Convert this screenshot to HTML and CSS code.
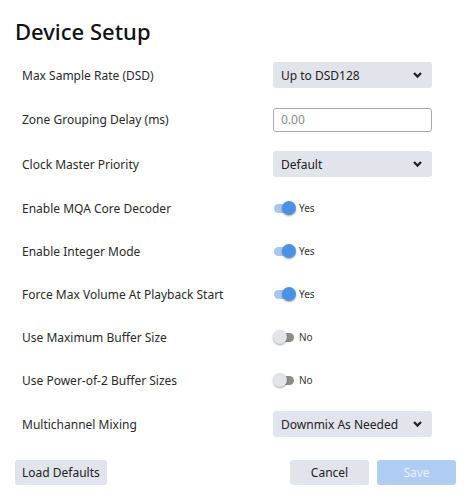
FILE: index.html
```html
<!DOCTYPE html>
<html lang="en">
<head>
  <meta charset="UTF-8">
  <title>Device Setup</title>
  <link rel="stylesheet" href="styles.css">
</head>
<body>
  <div class="dialog">
    <h1>Device Setup</h1>
    <div class="rows">
      <div class="row tall">
        <span class="label">Max Sample Rate (DSD)</span>
        <div class="select"><span>Up to DSD128</span><svg class="chev" viewBox="0 0 10 8" width="11" height="8"><path d="M1.5 2 L5 5.5 L8.5 2" fill="none" stroke="#222" stroke-width="2.3"/></svg></div>
      </div>
      <div class="row mid">
        <span class="label">Zone Grouping Delay (ms)</span>
        <div class="input">0.00</div>
      </div>
      <div class="row tall">
        <span class="label">Clock Master Priority</span>
        <div class="select"><span>Default</span><svg class="chev" viewBox="0 0 10 8" width="11" height="8"><path d="M1.5 2 L5 5.5 L8.5 2" fill="none" stroke="#222" stroke-width="2.3"/></svg></div>
      </div>
      <div class="row">
        <span class="label">Enable MQA Core Decoder</span>
        <div class="toggle on"><span class="track"><span class="knob"></span></span>Yes</div>
      </div>
      <div class="row">
        <span class="label">Enable Integer Mode</span>
        <div class="toggle on"><span class="track"><span class="knob"></span></span>Yes</div>
      </div>
      <div class="row">
        <span class="label">Force Max Volume At Playback Start</span>
        <div class="toggle on"><span class="track"><span class="knob"></span></span>Yes</div>
      </div>
      <div class="row">
        <span class="label">Use Maximum Buffer Size</span>
        <div class="toggle"><span class="track"><span class="knob"></span></span>No</div>
      </div>
      <div class="row">
        <span class="label">Use Power-of-2 Buffer Sizes</span>
        <div class="toggle"><span class="track"><span class="knob"></span></span>No</div>
      </div>
      <div class="row tall">
        <span class="label">Multichannel Mixing</span>
        <div class="select"><span>Downmix As Needed</span><svg class="chev" viewBox="0 0 10 8" width="11" height="8"><path d="M1.5 2 L5 5.5 L8.5 2" fill="none" stroke="#222" stroke-width="2.3"/></svg></div>
      </div>
    </div>
    <div class="buttons">
      <button class="btn">Load Defaults</button>
      <span class="spacer"></span>
      <button class="btn cancel">Cancel</button>
      <button class="btn save">Save</button>
    </div>
  </div>
</body>
</html>
```

FILE: styles.css
```css
body {
  margin: 0;
  background: #fff;
  font-family: 'Noto Sans', 'Open Sans', sans-serif;
  color: #222;
}
.dialog {
  width: 470px;
  height: 500px;
  box-sizing: border-box;
  padding: 16px 14px 0 15px;
}
h1 {
  margin: 0;
  font-size: 22px;
  font-weight: 500;
  line-height: 30px;
  color: #111;
}
.rows {
  padding: 6.5px 24px 0 7px;
}
.row {
  display: flex;
  align-items: center;
  justify-content: space-between;
  height: 43px;
  font-size: 12px;
}
.row.tall {
  height: 45px;
}
.row.mid {
  height: 44px;
}
.label {
  color: #2a2a2a;
}
.select {
  width: 159px;
  height: 26px;
  box-sizing: border-box;
  background: #e1e4eb;
  border-radius: 3px;
  display: flex;
  align-items: center;
  justify-content: space-between;
  padding: 0 9px 0 8px;
  font-size: 12px;
  color: #222;
}
.input {
  width: 159px;
  height: 24px;
  box-sizing: border-box;
  border: 1px solid #a9a9ab;
  border-radius: 3px;
  padding: 0 7px;
  line-height: 22px;
  color: #8a8a8a;
  font-size: 12px;
}
.toggle {
  width: 159px;
  display: flex;
  align-items: center;
  font-size: 10px;
  color: #333;
}
.track {
  position: relative;
  width: 20px;
  height: 9px;
  border-radius: 5px;
  background: #8c8c8c;
  margin: 0 5px 0 1px;
}
.knob {
  position: absolute;
  top: -3px;
  left: -1px;
  width: 14px;
  height: 14px;
  border-radius: 50%;
  background: #e3e4e8;
  box-shadow: 0 1px 2px rgba(0,0,0,0.35);
}
.toggle.on .track {
  background: #a7c7ef;
}
.toggle.on .knob {
  left: 8px;
  background: #4b92e3;
}
.buttons {
  display: flex;
  gap: 8px;
  margin-top: 13.5px;
}
.spacer {
  flex: 1;
}
.btn {
  height: 25px;
  border: none;
  border-radius: 3px;
  background: #e1e4eb;
  font-family: 'Noto Sans', 'Open Sans', sans-serif;
  font-size: 12px;
  color: #222;
  padding: 0 7px;
}
.cancel, .save {
  width: 79px;
}
.save {
  background: #afcdf2;
  color: #e8f0fb;
}
```
